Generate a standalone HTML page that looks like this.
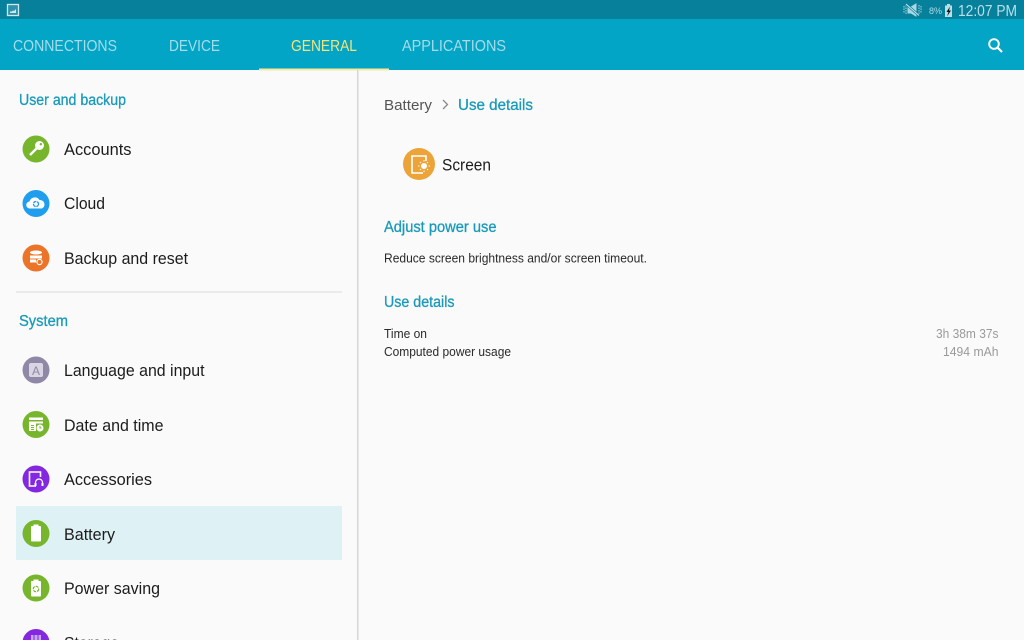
<!DOCTYPE html>
<html><head><meta charset="utf-8"><style>
html,body{margin:0;padding:0;width:1024px;height:640px;overflow:hidden;background:#fafafa}
svg{display:block}
text{font-family:"Liberation Sans",sans-serif}
.tab{font-size:15.5px;fill:#a6dbe8}
.it{font-size:17px;fill:#1c1c1c}
.hd{font-size:15.5px;fill:#1a9ab9;stroke:#1a9ab9;stroke-width:.3px}
.sm{font-size:13px;fill:#2a2a2a}
.gr{font-size:13px;fill:#9a9a9a}
</style></head><body>
<svg width="1024" height="640" viewBox="0 0 1024 640" xmlns="http://www.w3.org/2000/svg">
<rect width="1024" height="640" fill="#fafafa"/>
<rect width="1024" height="19" fill="#07809c"/>
<rect y="19" width="1024" height="51" fill="#02a5c6"/>
<rect x="259" y="68.500" width="130" height="2" fill="#f7e9a0"/>
<rect x="357" y="70" width="1.500" height="570" fill="#d6d6d6"/>

<rect x="7.500" y="4.500" width="11" height="11" fill="#2d93ad" stroke="#cfe8ee" stroke-width="1.300"/>
<path d="M10 13v-1.500h2l1-1 1 .5 2-2v4z" fill="#cfe8ee"/>

<g fill="none" stroke="#a9d8e3" stroke-width="1">
<path d="M904 6v7M906 5v9M919 5v9M921 6v7" stroke-dasharray="1.500 1"/>
<path d="M908 7h3l5-3v12l-5-3h-3z" fill="#a9d8e3"/>
<path d="M906 4l13 11.500" stroke="#07809c" stroke-width="2.500"/>
<path d="M906 4l13 11.500" stroke="#cfe8ee" stroke-width="1"/>
</g>
<text x="929" y="14" font-size="9.500" style="fill:#a9dde9" textLength="13" lengthAdjust="spacingAndGlyphs">8%</text>
<rect x="945" y="5.500" width="7" height="11.500" fill="#b8dfe8"/><rect x="947" y="4" width="3" height="1.500" fill="#b8dfe8"/>
<path d="M950 6.500l-3.500 5.500h2l-1.500 4.500 4-6h-2z" fill="#111"/>
<text x="958" y="16" font-size="16" style="fill:#b5e0ea" textLength="59" lengthAdjust="spacingAndGlyphs">12:07 PM</text>

<text class="tab" x="13" y="51" textLength="104" lengthAdjust="spacingAndGlyphs">CONNECTIONS</text>
<text class="tab" x="169" y="51" textLength="51" lengthAdjust="spacingAndGlyphs">DEVICE</text>
<text class="tab" x="291" y="51" textLength="66" lengthAdjust="spacingAndGlyphs" style="fill:#f6e27a">GENERAL</text>
<text class="tab" x="402" y="51" textLength="104" lengthAdjust="spacingAndGlyphs">APPLICATIONS</text>
<circle cx="994" cy="44" r="4.800" fill="none" stroke="#fff" stroke-width="1.900"/>
<path d="M997.500 47.500l4.500 4.500" stroke="#fff" stroke-width="2.200" fill="none"/>

<text class="hd" x="19" y="105" textLength="107" lengthAdjust="spacingAndGlyphs">User and backup</text>

<circle cx="36" cy="149" r="13.500" fill="#77b62c"/>
<circle cx="39.500" cy="145.500" r="4.500" fill="#fff"/>
<circle cx="40.800" cy="144.200" r="1.200" fill="#77b62c"/>
<path d="M37.500 147.500l-7.500 7.500" stroke="#fff" stroke-width="2.400" fill="none"/>
<text class="it" x="64" y="155" textLength="67.500" lengthAdjust="spacingAndGlyphs">Accounts</text>

<circle cx="36" cy="203.500" r="13.500" fill="#1f9eee"/>
<path d="M30 208.500a3.500 3.500 0 0 1-.5-7 5.500 5.500 0 0 1 10-1.500 4.500 4.500 0 0 1 2.500 8.500z" fill="#fff"/>
<circle cx="36" cy="204" r="2.500" fill="none" stroke="#1f9eee" stroke-width="1.300" stroke-dasharray="3.500 .7"/>
<text class="it" x="64" y="209" textLength="41" lengthAdjust="spacingAndGlyphs">Cloud</text>

<circle cx="36" cy="258" r="13.500" fill="#ec7429"/>
<ellipse cx="36" cy="252.500" rx="6" ry="2" fill="#fff"/>
<rect x="30" y="255.500" width="12" height="3" fill="#fff"/>
<rect x="30" y="259.500" width="6" height="3" fill="#fff"/>
<circle cx="39.500" cy="262" r="2.600" fill="none" stroke="#fff" stroke-width="1.200"/>
<text class="it" x="64" y="264" textLength="124" lengthAdjust="spacingAndGlyphs">Backup and reset</text>

<rect x="16" y="291.500" width="326" height="1" fill="#dcdcdc"/>
<text class="hd" x="19" y="326" textLength="49" lengthAdjust="spacingAndGlyphs">System</text>

<circle cx="36" cy="370" r="13.500" fill="#8f88a6"/>
<rect x="29" y="363" width="14" height="14" rx="2" fill="#d9d6e2"/>
<text x="36" y="375" font-size="12" text-anchor="middle" style="fill:#8f88a6">A</text>
<text class="it" x="64" y="376" textLength="140.500" lengthAdjust="spacingAndGlyphs">Language and input</text>

<circle cx="36" cy="424.500" r="13.500" fill="#77b62c"/>
<rect x="29" y="417.500" width="14" height="2.500" fill="#fff"/>
<path d="M29 421.500h14v2h-14zM29 423h7v8h-7z" fill="#fff"/>
<path d="M31 425.500h3M31 427.500h3M31 429.500h3" stroke="#77b62c" stroke-width="1"/>
<circle cx="40" cy="428" r="3.500" fill="#fff"/>
<path d="M40 426v2h1.500" stroke="#77b62c" stroke-width="1" fill="none"/>
<text class="it" x="64" y="431" textLength="99.500" lengthAdjust="spacingAndGlyphs">Date and time</text>

<circle cx="36" cy="479" r="13.500" fill="#8427e0"/>
<path d="M36 486h-6.500v-14h11v5" fill="none" stroke="#fff" stroke-width="1.600"/>
<path d="M35.500 484v-1.500a3.500 3.500 0 0 1 7 0v1.500" fill="none" stroke="#fff" stroke-width="1.200"/>
<rect x="34.500" y="483" width="2" height="3" fill="#fff"/><rect x="41.500" y="483" width="2" height="3" fill="#fff"/>
<text class="it" x="64" y="485" textLength="88" lengthAdjust="spacingAndGlyphs">Accessories</text>

<rect x="16" y="506" width="326" height="54" fill="#def1f5"/>
<circle cx="36" cy="533.500" r="13.500" fill="#77b62c"/>
<rect x="33.500" y="524.500" width="5" height="2" fill="#fff"/>
<rect x="31" y="526" width="10" height="15.500" rx="1" fill="#fff"/>
<text class="it" x="64" y="540" textLength="51" lengthAdjust="spacingAndGlyphs">Battery</text>

<circle cx="36" cy="588" r="13.500" fill="#77b62c"/>
<rect x="33.500" y="579.500" width="5" height="2" fill="#fff"/>
<rect x="31" y="581" width="10" height="15.500" rx="1" fill="#fff"/>
<circle cx="36" cy="589" r="2.700" fill="none" stroke="#77b62c" stroke-width="1.200" stroke-dasharray="3 1"/>
<text class="it" x="64" y="594" textLength="96" lengthAdjust="spacingAndGlyphs">Power saving</text>

<circle cx="36" cy="642.500" r="13.500" fill="#8427e0"/>
<rect x="31" y="635" width="10" height="7" fill="#c9a6f2"/>
<path d="M34 635v7M38 635v7" stroke="#8427e0" stroke-width="1"/>
<text class="it" x="64" y="648.500" textLength="55" lengthAdjust="spacingAndGlyphs">Storage</text>

<text x="384" y="110" font-size="15" style="fill:#555" textLength="48" lengthAdjust="spacingAndGlyphs">Battery</text>
<path d="M443 100l4.500 4.500-4.500 4.500" fill="none" stroke="#8a8a8a" stroke-width="1.300"/>
<text class="hd" x="458" y="110" textLength="75" lengthAdjust="spacingAndGlyphs">Use details</text>

<circle cx="419" cy="164" r="16" fill="#eca338"/>
<path d="M423 173h-11v-17h14v5" fill="none" stroke="#fff" stroke-width="1.600"/>
<circle cx="424" cy="166" r="3" fill="#fff"/>
<path d="M424 160v1.500M424 170.500v1.500M418 166h1.500M428.500 166h1.500M420 162l1 1M428 162l-1 1M420 170l1-1M428 170l-1-1" stroke="#fff" stroke-width="1"/>
<text x="442" y="170.500" font-size="16.500" style="fill:#1c1c1c" textLength="49" lengthAdjust="spacingAndGlyphs">Screen</text>

<text class="hd" x="384" y="232" textLength="112.500" lengthAdjust="spacingAndGlyphs">Adjust power use</text>
<text class="sm" x="384" y="262.500" textLength="263" lengthAdjust="spacingAndGlyphs">Reduce screen brightness and/or screen timeout.</text>
<text class="hd" x="384" y="307" textLength="70.500" lengthAdjust="spacingAndGlyphs">Use details</text>
<text class="sm" x="384" y="338" textLength="43" lengthAdjust="spacingAndGlyphs">Time on</text>
<text class="sm" x="384" y="356" textLength="127" lengthAdjust="spacingAndGlyphs">Computed power usage</text>
<text class="gr" x="936" y="338" textLength="62.500" lengthAdjust="spacingAndGlyphs">3h 38m 37s</text>
<text class="gr" x="943" y="356" textLength="55.500" lengthAdjust="spacingAndGlyphs">1494 mAh</text>
</svg>
</body></html>
